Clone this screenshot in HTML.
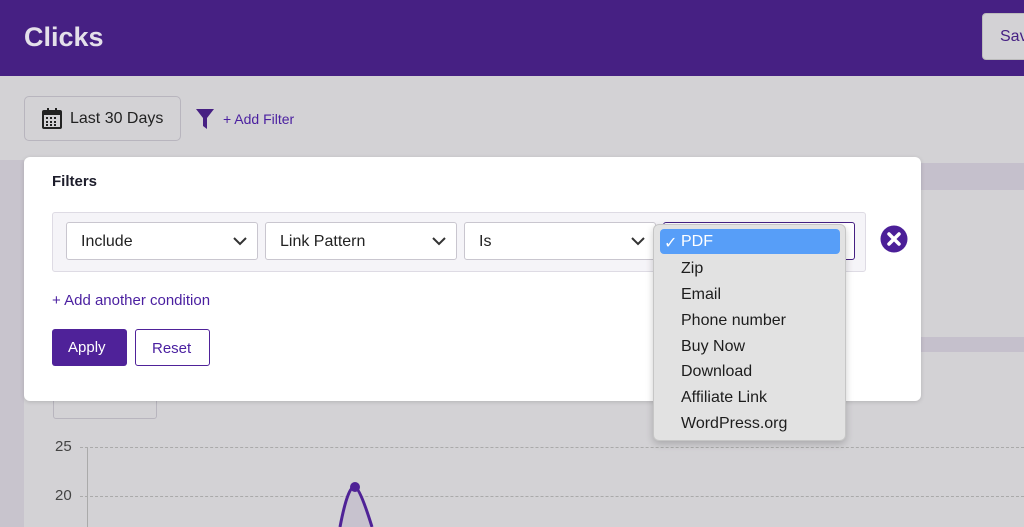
<!DOCTYPE html>
<html><head><style>
*{box-sizing:border-box;margin:0;padding:0}
body{width:1024px;height:527px;overflow:hidden;background:#d3d2d5;font-family:"Liberation Sans",sans-serif;position:relative}
.abs{position:absolute}
.sel{position:absolute;top:222px;height:38px;background:#fff;border:1px solid #c9c6cf;border-radius:3px;font-size:16px;color:#222;padding:10px 14px}
.sel svg{position:absolute;right:10px;top:14px}
.mi{position:absolute;left:681px;font-size:16px;color:#1d1d1d}
</style></head><body>
<div class="abs" style="left:0;top:0;width:1024px;height:76px;background:#462083"></div>
<div class="abs" style="left:24px;top:22px;font-size:27px;font-weight:bold;color:#e4e0ea">Clicks</div>
<div class="abs" style="left:982px;top:13px;width:60px;height:47px;background:#d3d2d5;border-radius:4px;border:1px solid #bbb;font-size:16px;color:#462083;padding:14px 17px">Save</div>
<div class="abs" style="left:0;top:160px;width:24px;height:367px;background:#c8c4cd"></div>
<div class="abs" style="left:921px;top:163px;width:103px;height:27px;background:#c5c0cc"></div>
<div class="abs" style="left:921px;top:337px;width:103px;height:15px;background:#c5c0cc"></div>
<div class="abs" style="left:24px;top:96px;width:157px;height:45px;border:1px solid #b8b5be;border-radius:5px;background:#d3d2d5"></div>
<svg class="abs" style="left:42px;top:108px" width="20" height="21" viewBox="0 0 20 21"><rect x="1" y="3" width="18" height="17" rx="1" fill="none" stroke="#222" stroke-width="2"/><rect x="1" y="3" width="18" height="4" fill="#222"/><rect x="5" y="0" width="2" height="5" fill="#222"/><rect x="13" y="0" width="2" height="5" fill="#222"/><g fill="#222"><rect x="4" y="9" width="2" height="2"/><rect x="8" y="9" width="2" height="2"/><rect x="12" y="9" width="2" height="2"/><rect x="4" y="13" width="2" height="2"/><rect x="8" y="13" width="2" height="2"/><rect x="12" y="13" width="2" height="2"/><rect x="4" y="16" width="2" height="2"/><rect x="8" y="16" width="2" height="2"/><rect x="12" y="16" width="2" height="2"/></g></svg>
<div class="abs" style="left:70px;top:110px;font-size:16px;color:#222">Last 30 Days</div>
<svg class="abs" style="left:196px;top:109px" width="18" height="20" viewBox="0 0 18 20"><path d="M0 0H18L11 9V20L7 17V9Z" fill="#462083"/></svg>
<div class="abs" style="left:223px;top:111px;font-size:14px;color:#4a1fa0">+ Add Filter</div>
<!-- chart -->
<div class="abs" style="left:53px;top:385px;width:104px;height:34px;border:1px solid #b8b5be;border-radius:3px"></div>
<div class="abs" style="left:55px;top:438px;font-size:15px;color:#444">25</div>
<div class="abs" style="left:55px;top:487px;font-size:15px;color:#444">20</div>
<div class="abs" style="left:87px;top:447px;width:1px;height:80px;background:#aaa"></div>
<div class="abs" style="left:80px;top:447px;width:944px;border-top:1px dashed #aaa"></div>
<div class="abs" style="left:80px;top:496px;width:944px;border-top:1px dashed #aaa"></div>
<svg class="abs" style="left:330px;top:480px" width="60" height="47"><path d="M10 47 Q18 5 25 7 Q30 8 42 47Z" fill="#c7c2ce"/><path d="M10 47 Q18 5 25 7 Q30 8 42 47" fill="none" stroke="#4f2296" stroke-width="3"/><circle cx="25" cy="7" r="5" fill="#4f2296"/></svg>
<!-- panel -->
<div class="abs" style="left:24px;top:157px;width:897px;height:244px;background:#fff;border-radius:6px;box-shadow:0 1px 4px rgba(0,0,0,.15)"></div>
<div class="abs" style="left:52px;top:173px;font-size:15px;font-weight:bold;color:#1d1d2b">Filters</div>
<div class="abs" style="left:52px;top:212px;width:814px;height:60px;background:#f5f4f8;border:1px solid #dedbe4;border-radius:3px"></div>
<div class="sel" style="left:66px;width:192px">Include<svg width="14" height="9"><path d="M1 1L7 7L13 1" fill="none" stroke="#333" stroke-width="2"/></svg></div>
<div class="sel" style="left:265px;width:192px">Link Pattern<svg width="14" height="9"><path d="M1 1L7 7L13 1" fill="none" stroke="#333" stroke-width="2"/></svg></div>
<div class="sel" style="left:464px;width:192px">Is<svg width="14" height="9"><path d="M1 1L7 7L13 1" fill="none" stroke="#333" stroke-width="2"/></svg></div>
<div class="sel" style="left:663px;width:192px;border-color:#462083"></div>
<svg class="abs" style="left:880px;top:225px" width="28" height="28"><circle cx="14" cy="14" r="13.5" fill="#4b1f98"/><path d="M9 9L19 19M19 9L9 19" stroke="#fff" stroke-width="3.5" stroke-linecap="round"/></svg>
<div class="abs" style="left:52px;top:292px;font-size:15px;color:#4a1fa0">+ Add another condition</div>
<div class="abs" style="left:52px;top:329px;width:75px;height:37px;background:#4f2299;border-radius:3px;color:#fff;font-size:15px;padding:10px 16px">Apply</div>
<div class="abs" style="left:135px;top:329px;width:75px;height:37px;border:1px solid #4f2299;border-radius:3px;color:#4a1fa0;font-size:15px;padding:10px 16px">Reset</div>
<!-- dropdown -->
<div class="abs" style="left:653px;top:224px;width:193px;height:217px;background:#e2e2e2;border:1px solid #c6c6c6;border-radius:6px;box-shadow:0 3px 8px rgba(0,0,0,.2)"></div>
<div class="abs" style="left:660px;top:229px;width:180px;height:25px;background:#579ef8;border-radius:4px"></div>
<div class="abs" style="left:664px;top:233px;font-size:16px;color:#fff">✓</div>
<div class="mi" style="top:233px;color:#fff">PDF</div>
<div class="mi" style="top:260px">Zip</div>
<div class="mi" style="top:286px">Email</div>
<div class="mi" style="top:312px">Phone number</div>
<div class="mi" style="top:338px">Buy Now</div>
<div class="mi" style="top:363px">Download</div>
<div class="mi" style="top:389px">Affiliate Link</div>
<div class="mi" style="top:415px">WordPress.org</div>
</body></html>
